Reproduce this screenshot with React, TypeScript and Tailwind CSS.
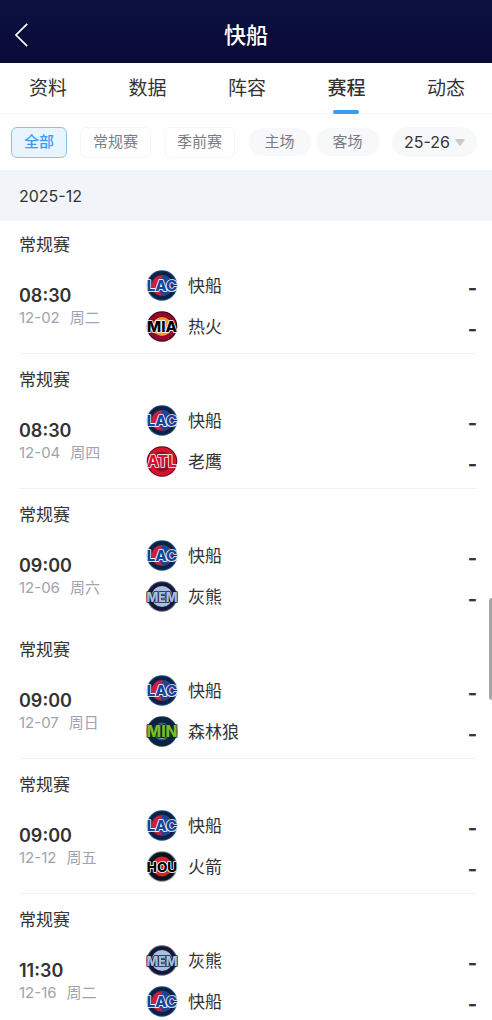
import { useState } from "react";
import clsx from "clsx";

type TeamCode = "LAC" | "MIA" | "ATL" | "MEM" | "MIN" | "HOU";

type Game = {
  time: string;
  date: string;
  weekday: string;
  teams: [TeamCode, TeamCode];
  faintLine?: boolean;
};

type Badge = {
  name: string;
  rim: string;
  ring: string;
  core: string;
  half?: string;
  coreR: number;
  text: string;
  outline: string;
  size: number;
};

const TEAMS: Record<TeamCode, Badge> = {
  LAC: { name: "快船", rim: "#1d4f8c", ring: "#0b2244", core: "#c8203f", half: "#1d4796", coreR: 10.5, text: "#17459a", outline: "#ffffff", size: 15 },
  MIA: { name: "热火", rim: "#2a0a12", ring: "#98002e", core: "#f5992a", coreR: 9.5, text: "#000000", outline: "#ffffff", size: 15 },
  ATL: { name: "老鹰", rim: "#5a0a18", ring: "#d3132f", core: "#8d0f22", coreR: 10, text: "#d3132f", outline: "#ffffff", size: 15.5 },
  MEM: { name: "灰熊", rim: "#5d5f6b", ring: "#12173f", core: "#a9bfdb", coreR: 10.5, text: "#a9bfdb", outline: "#12173f", size: 12.5 },
  MIN: { name: "森林狼", rim: "#1c3a4c", ring: "#0c2340", core: "#236192", coreR: 9, text: "#78be20", outline: "#0c2340", size: 15.5 },
  HOU: { name: "火箭", rim: "#7d8488", ring: "#06141c", core: "#d5202f", coreR: 10, text: "#000000", outline: "#ffffff", size: 13.5 },
};

const TABS = ["资料", "数据", "阵容", "赛程", "动态"];
const STAGES = ["全部", "常规赛", "季前赛"];
const VENUES = ["主场", "客场"];

const GAMES: Game[] = [
  { time: "08:30", date: "12-02", weekday: "周二", teams: ["LAC", "MIA"] },
  { time: "08:30", date: "12-04", weekday: "周四", teams: ["LAC", "ATL"] },
  { time: "09:00", date: "12-06", weekday: "周六", teams: ["LAC", "MEM"], faintLine: true },
  { time: "09:00", date: "12-07", weekday: "周日", teams: ["LAC", "MIN"] },
  { time: "09:00", date: "12-12", weekday: "周五", teams: ["LAC", "HOU"] },
  { time: "11:30", date: "12-16", weekday: "周二", teams: ["MEM", "LAC"] },
];

export default function App() {
  const [tab, setTab] = useState("赛程");
  const [stage, setStage] = useState("全部");
  const [venue, setVenue] = useState<string | null>(null);
  const [season, setSeason] = useState("25-26");

  return (
    <div className="relative flex h-screen flex-col overflow-hidden bg-white font-['Inter','Noto_Sans_CJK_SC',sans-serif] text-[#333333]">
      <header className="grid h-[63px] shrink-0 grid-cols-[1fr_auto_1fr] items-center bg-linear-to-b from-[#0b1040] to-[#090b37] px-3 pt-1.5 text-white">
        <button aria-label="返回" className="w-5">
          <svg viewBox="0 0 20 26" className="h-[26px] w-5" fill="none" stroke="currentColor" strokeWidth="1.7">
            <path d="M15.2 1.8 4 13l11.2 11.2" />
          </svg>
        </button>
        <h1 className="text-[22px] leading-8 font-medium">快船</h1>
      </header>

      <nav className="flex h-[51px] shrink-0 justify-between border-b border-[#f5f5f5] pr-[27px] pl-[29px]">
        {TABS.map((t) => (
          <button
            key={t}
            onClick={() => setTab(t)}
            className={clsx("relative h-[51px] text-[19px] leading-[52px]", t === tab && "font-medium")}
          >
            {t}
            {t === tab && (
              <span className="absolute bottom-0 left-1/2 h-1 w-[26px] -translate-x-1/2 rounded-full bg-[#3a9cf0]" />
            )}
          </button>
        ))}
      </nav>

      <div className="flex h-14 shrink-0 items-center justify-between pr-[15px] pl-[11px] text-[15px] text-[#7b7d85]">
        <div className="flex gap-[13px]">
          {STAGES.map((s) => (
            <button
              key={s}
              onClick={() => setStage(s)}
              className={clsx(
                "h-[31px] rounded-md border px-3",
                s === stage ? "border-[#86c3f2] bg-[#e8f4fe] font-medium text-[#3a9cf0]" : "border-[#f5f6f8]"
              )}
            >
              {s}
            </button>
          ))}
        </div>
        <div className="flex gap-1.5">
          {VENUES.map((v) => (
            <button
              key={v}
              onClick={() => setVenue(v === venue ? null : v)}
              className={clsx("h-7 rounded-full px-4", v === venue ? "bg-[#e8f4fe] text-[#3a9cf0]" : "bg-[#f7f8fa]")}
            >
              {v}
            </button>
          ))}
        </div>
        <div className="relative h-[30px] rounded-full bg-[#f7f8fa]">
          <select
            aria-label="赛季"
            value={season}
            onChange={(e) => setSeason(e.target.value)}
            className="h-full w-[85px] appearance-none bg-transparent pl-3 text-base text-[#333333] outline-none"
          >
            <option>25-26</option>
            <option>24-25</option>
          </select>
          <svg viewBox="0 0 10 7" className="pointer-events-none absolute top-3 right-3 h-[7px] w-[10px]" fill="#c8c9cb">
            <path d="M1 0h8q1 0 .5 1L5.6 6.4q-.6.7-1.2 0L.5 1Q0 0 1 0Z" />
          </svg>
        </div>
      </div>

      <main className="min-h-0 flex-1 overflow-y-auto [scrollbar-width:none]">
        <h2 className="h-[51px] bg-[#f1f5f9] px-[19px] text-base leading-[52px]">2025-12</h2>
        <ul>
          {GAMES.map((g) => (
            <GameRow key={g.date} game={g} />
          ))}
        </ul>
      </main>

      {/* scroll position marker */}
      <div className="absolute top-[598px] right-0 h-[102px] w-[3px] rounded-l-full bg-[#a5a5a5]" />
    </div>
  );
}

function GameRow({ game }: { game: Game }) {
  return (
    <li className="group pr-[15px] pl-[19px]">
      <div
        className={clsx(
          "border-b pt-4 pb-1.5 group-first:pt-3.5",
          game.faintLine ? "border-[#fdfdfd]" : "border-[#f3f3f3]"
        )}
      >
        <h3 className="text-[17px] leading-5">常规赛</h3>
        <div className="mt-2.5 flex">
          <div className="w-[127px] pt-[19px]">
            <p className="text-lg leading-6 font-semibold">{game.time}</p>
            <p className="flex gap-2.5 text-[15px] leading-5 text-[#a0a3b0]">
              <span>{game.date}</span>
              <span>{game.weekday}</span>
            </p>
          </div>
          <div className="flex-1">
            {game.teams.map((code) => (
              <div key={code} className="flex h-[41px] items-center">
                <TeamLogo code={code} />
                <span className="ml-2.5 text-[17px] leading-6">{TEAMS[code].name}</span>
                <span className="ml-auto pt-1 text-xl leading-6 font-bold">-</span>
              </div>
            ))}
          </div>
        </div>
      </div>
    </li>
  );
}

function TeamLogo({ code }: { code: TeamCode }) {
  const b = TEAMS[code];
  return (
    <svg viewBox="0 0 32 32" className="size-8 overflow-visible" aria-hidden="true">
      <circle cx="16" cy="15.5" r="15.3" fill={b.rim} />
      <circle cx="16" cy="15.5" r="14.3" fill={b.ring} />
      <circle cx="16" cy="15.5" r={b.coreR} fill={b.core} />
      {b.half && <path d="M16 5a10.5 10.5 0 0 1 0 21l-2-6 4-5-2-4Z" fill={b.half} />}
      {code === "ATL" && <circle cx="16" cy="15.5" r="5" fill="#d3132f" />}
      {code === "MIN" && <circle cx="16" cy="15.5" r="7" fill="#0c2340" stroke="#9ea2a2" strokeWidth="1" />}
      <text
        x="16"
        y="21"
        textAnchor="middle"
        fontFamily="Inter, sans-serif"
        fontWeight="800"
        fontSize={b.size}
        fill={b.text}
        stroke={b.outline}
        strokeWidth="1.6"
        strokeLinejoin="round"
        paintOrder="stroke"
      >
        {code}
      </text>
    </svg>
  );
}
